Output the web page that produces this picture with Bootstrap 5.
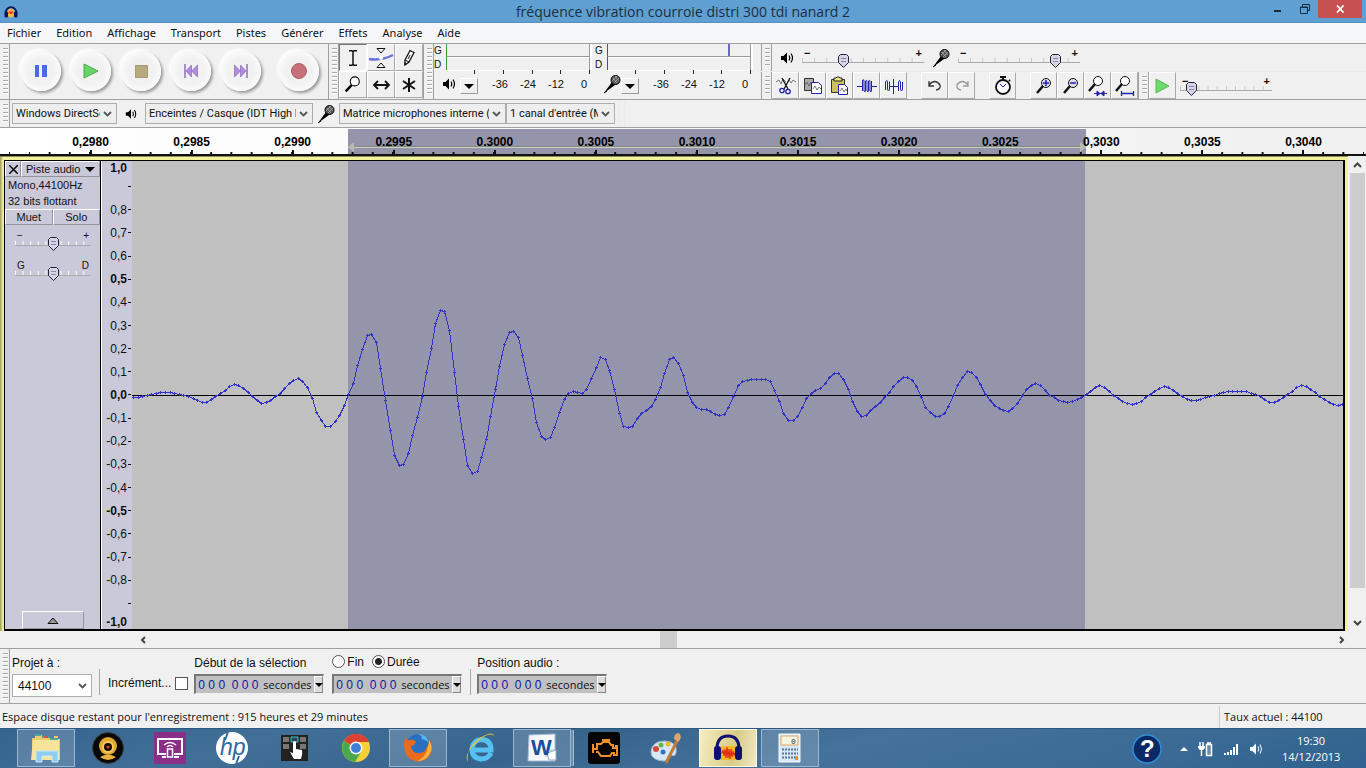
<!DOCTYPE html>
<html lang="fr">
<head>
<meta charset="utf-8">
<meta name="viewport" content="width=device-width, initial-scale=1">
<title>fréquence vibration courroie distri 300 tdi nanard 2</title>
<link href="https://cdn.jsdelivr.net/npm/bootstrap@5.3.0/dist/css/bootstrap.min.css" rel="stylesheet">
<style>
:root{--face:#f0f0f0;--edge:#a0a0a0;--panel:#c9c9da;--sel:#9494aa;--wave:#3232c8}
body{font:12px/16px "Open Sans","Noto Sans",sans-serif;color:#111;background:var(--face);min-height:100vh;overflow:hidden}
button,select,input{font:inherit;color:inherit;border-radius:0}
svg{display:block;flex:none}
.arial{font-family:"Liberation Sans",Arial,sans-serif}
/* title and menus */
.titlebar{height:23px;background:#5f9fd1;color:#1b2f40;border-bottom:1px solid #5590c0}
.titlebar h1{font:14px/24px "Open Sans","Noto Sans",sans-serif;margin:0}
.winbtns{top:0;right:4px}
.winbtns button{border:0;background:none;height:18px;width:27px;padding:0;display:flex;align-items:center;justify-content:center}
.winbtns .closebtn{width:44px;background:#c75050}
.menus{height:20px;background:#f5f6f7;padding-left:7px;gap:15px}
.menus a{color:#111;text-decoration:none;line-height:20px;font-family:"Noto Sans",sans-serif;font-size:11px}
/* toolbars */
.tbrow{border-top:1px solid var(--edge)}
.tbtop{height:56px}
.transport{padding-left:6px;padding-right:4px}
.grip{width:10px;flex:none;border-right:1px solid var(--edge);background:repeating-linear-gradient(#a8a8a8 0 1px,#fff 1px 2px,transparent 2px 4px) 3px 4px/5px calc(100% - 8px) no-repeat}
.grip.lined{border-left:1px solid var(--edge);width:11px}
.round-btn{width:50px;height:54px;border:0;background:none;padding:0;display:flex;align-items:center;justify-content:center}
.round-btn span{width:40px;height:40px;border-radius:50%;background:radial-gradient(circle at 50% 50%,#f1f1f1 45%,#fff 85%);box-shadow:2px 2px 3px #9a9a9a,-2px -2px 3px #fff;display:flex;align-items:center;justify-content:center}
.sqbtn{width:27px;height:27px;padding:0;border:1px solid;border-color:#fff #a9a9a9 #a9a9a9 #fff;background:var(--face);display:flex;align-items:center;justify-content:center}
.sqbtn.tall{width:28px}
.sqbtn.pressed{border-color:#777 #fff #fff #777}
.gap14{width:14px}
.meters{padding-right:5px}
.meter{width:161px}
.gd{width:12px;font-size:10px;line-height:14px}
.lvl{width:144px;height:13px;border-left:1px solid #3a9a3a;border-right:1px solid #999;border-bottom:1px solid #999;box-shadow:0 1px #fff,2px 0 #fff}
.lvl.in{border-left-color:#a33}
.lvl .peak{width:2px;height:12px;margin-left:120px;background:#6868d0}
.lvlticks{height:4px;width:116px;margin-left:28px}
.lvlticks i{width:1px;background:#222}
.lvlrow{width:144px;height:20px;font-size:11px;margin-left:-4px}
.lvlrow svg{width:18px}
.lvlrow span{width:28px;flex:none;text-align:center}
.lvlrow button+span{margin-left:8px}
.dropbtn{width:18px;height:16px;flex:none;padding:0;border:1px solid;border-color:#fff #999 #999 #fff;background:var(--face);display:flex;align-items:center;justify-content:center}
.tri{border:5px solid transparent;border-top-color:#000;border-bottom:0}
.flatsel{appearance:none;height:21px;border:1px solid #adadad;padding:0 16px 0 3px;font:11px/18px Roboto,"Noto Sans",sans-serif;color:#111;background:#eee url("data:image/svg+xml,%3Csvg xmlns='http://www.w3.org/2000/svg' width='9' height='6'%3E%3Cpath d='M1 1l3.500 3.500L8 1' fill='none' stroke='%23555' stroke-width='1.800'/%3E%3C/svg%3E") right 4px center no-repeat}
/* sliders */
.sl{display:flex;flex-direction:column}
.sl .ends{display:flex;justify-content:space-between;padding:0 2px;height:10px;font:11px/10px "Liberation Sans",sans-serif}
.sl .ends b{font-weight:bold}
.sl input{--tick:#c4c4c4;appearance:none;width:100%;height:14px;margin:-4px 0 0;background:linear-gradient(#aaa,#aaa) 0 8px/100% 1px no-repeat,linear-gradient(90deg,var(--tick) 0 10%,transparent 10%) 0 4px/10% 4px repeat-x}
.sl input::-webkit-slider-thumb{appearance:none;width:11px;height:14px;background:url("data:image/svg+xml,%3Csvg xmlns='http://www.w3.org/2000/svg' width='11' height='14'%3E%3Cpath d='M2.500.5h6l2 2v6l-5 5-5-5v-6z' fill='%23d4d4e6' stroke='%23223'/%3E%3Cpath d='M3 4.500h5M3 7.500h5' stroke='%238888a4'/%3E%3C/svg%3E")}
.w-gain{width:122px}.w-speed{width:92px}
/* time ruler */
.ruler{height:29px;border-top:1px solid var(--edge);border-bottom:2px solid #111;background:linear-gradient(90deg,#fff,#f0f0f0)}
.rsel{left:25.5%;width:54%;top:1px;bottom:0;background:var(--sel)}
.rsel i{left:0;right:0;bottom:6px;height:2px;background:#7d8c7d;border-bottom:1px solid #c8d0c0}
.rsel svg{bottom:2px}
.rcell{flex:1 1 0;text-align:center;font:bold 12px/28px "Liberation Sans",sans-serif;color:#000;background:linear-gradient(#111,#111) center bottom/2px 4px no-repeat,linear-gradient(90deg,transparent 45%,#111 45% 52%,transparent 52%) 0 100%/20% 2px repeat-x}
.rpad{background:linear-gradient(90deg,transparent 45%,#111 45% 52%,transparent 52%) 0 100%/20px 2px repeat-x}
/* track */
.trackwrap{background:linear-gradient(90deg,#9a9a60,#f2f29a 3px);padding:3px 3px 0 4px;border-top:1px solid #8c8c60}
.track{border:1px solid #000;border-right-width:2px;border-bottom-width:2px}
.tpanel{width:96px;background:var(--panel);border-right:1px solid #000;font-size:11px}
.tpanel button{background:none;border:1px solid;border-color:#fff #94949c #94949c #fff;padding:0;font-size:11px;line-height:14px}
.tpanel .info{padding-left:3px}
.tpanel .sl{width:76px;margin:6px 0 0 10px}
.tpanel .sl+.sl{margin-top:10px}
.tpanel .sl input{--tick:#fff}
.tpanel .sl b{font-weight:normal;font-size:10px}
.vscale{width:31px;background:var(--panel);border-left:1px solid #fff;font:12px/14px "Liberation Sans",sans-serif}
.vscale div{min-height:0;display:flex;align-items:center;justify-content:flex-end}
.vscale .u2{flex:2 2 0}.vscale .u1{flex:1 1 0}
.vscale .u2::after{content:"";width:3px;height:1px;background:#111;margin:0 1px}
.vscale b.u1{padding-right:5px;display:flex;align-items:center;justify-content:flex-end}
.wavebox{background:#c0c0c0;min-width:0}
.wavebox svg{position:absolute;inset:0;width:100%;height:100%}
.vscroll{width:18px;padding:0 1px 0 2px}
.sbtn{border:0;background:none;padding:0;display:flex;align-items:center;justify-content:center}
.vscroll .sbtn{height:17px}
.thumb{background:#cdcdcd}
/* selection bar */
.selbar{height:56px;border-top:1px solid var(--edge);border-bottom:1px solid var(--edge);font-size:12px}
.selbar .field{padding-top:6px}
.selbar .cap{line-height:16px;height:19px}
.rate{height:23px;width:80px;background-color:#fff;font:12px/20px "Liberation Sans",sans-serif;padding-left:5px}
.vsep{width:1px;height:26px;background:#a9a9a9}
.timebox{width:130px;height:20px;background:#c0c0c0;border:1px solid;border-color:#777 #eee #eee #777;border-width:2px 1px 1px 2px}
.timebox input{width:67px;border:0;background:none;padding:0 0 0 2px;color:#1414a8;font:12px/16px "Liberation Sans",sans-serif;outline:0}
.timebox label{font:11px/18px "Open Sans",sans-serif;width:51px}
.timebox button{width:9px;height:17px;flex:none;padding:0;border:1px solid;border-color:#fff #888 #888 #fff;background:#ddd;display:flex;align-items:center;justify-content:center}
.timebox .tri{border-width:4px 4px 0}
.selbar input[type=radio],.selbar input[type=checkbox]{appearance:none;width:13px;height:13px;margin:0;border:1px solid #555;background:#fff}
.selbar input[type=radio]{border-radius:50%}
.selbar input[type=radio]:checked{background:radial-gradient(circle,#222 0 3px,#fff 4px)}
.selbar .cap label{line-height:14px;padding-left:2px}
.statusbar{height:24px;font-size:11px;line-height:22px;padding:2px 2px 0}
.statusbar .ratecell{width:145px;border-left:1px solid #ccc;padding-left:4px}
/* taskbar */
.taskbar{height:40px;background:linear-gradient(165deg,#34648f 0,#416f98 20%,#37648d 40%,#44729a 60%,#3c6b96 80%,#2f628f);padding-left:17px;border-top:1px solid #2b5880;color:#fff}
.app{width:58px;height:38px;padding:0;border:1px solid transparent;background:none;display:flex;align-items:center;justify-content:center}
.app.open{border-color:#9db6cb;background:#ffffff2b}
.app.multi{box-shadow:3px 0 0 -1px #6f90ad,4px 0 0 -1px #a4bbce}
.app.active{border:1px solid #fffbe0;background:linear-gradient(100deg,#f5eec0,#d9cb86 60%,#efe9c4)}
.tray{gap:10px;padding-right:26px}
.clock{font:11px/16px "Open Sans",sans-serif;text-align:center;width:58px}
</style>
</head>
<body class="d-flex flex-column">

<svg width="0" height="0" class="position-absolute" aria-hidden="true">
  <symbol id="spk" viewBox="0 0 14 14"><path d="M1 5h2.500L7 1.500v11L3.500 9H1z" fill="#000"/><path d="M9 4.500q1.500 2.500 0 5M11 2.500q3 4.500 0 9" fill="none" stroke="#000" stroke-width="1.200"/></symbol>
  <symbol id="mic" viewBox="0 0 18 20"><path d="M1 19L9 8l3 3z" fill="#000"/><path d="M1 19l3-2" stroke="#000"/><circle cx="12.500" cy="6" r="4.500" fill="#555" stroke="#000"/><path d="M10 4l4 5M12 2l4 5M9 7l5-5M11 9l5-5" stroke="#aaa" stroke-width=".8"/></symbol>
  <symbol id="mag" viewBox="0 0 20 22"><circle cx="12" cy="7" r="5" fill="#fff" stroke="#000" stroke-width="1.200"/><path d="M8.500 11L2 18" stroke="#000" stroke-width="2.800"/></symbol>
</svg>

<header class="titlebar position-relative text-center">
  <svg class="position-absolute top-0 start-0 mt-1 ms-1" width="14" height="15" viewBox="0 0 28 28"><ellipse cx="14" cy="17" rx="7" ry="9" fill="#f6b63a"/><path d="M9 18l3-4 2 5 2-5 3 4" fill="none" stroke="#d22" stroke-width="2"/><path d="M3 18a11 13 0 0 1 22 0" fill="none" stroke="#0b1560" stroke-width="3.500"/><rect x="1" y="14" width="7" height="12" rx="3" fill="#0b1560"/><rect x="20" y="14" width="7" height="12" rx="3" fill="#0b1560"/></svg>
  <h1>fréquence vibration courroie distri 300 tdi nanard 2</h1>
  <div class="winbtns position-absolute d-flex">
    <button aria-label="Réduire"><svg width="8" height="8"><path d="M0 6h7" stroke="#1a2c3c" stroke-width="2"/></svg></button>
    <button aria-label="Restaurer"><svg width="10" height="10"><path d="M.5 3h7v6.500h-7zM2.500 2.500v-2h7v6h-2M0 3.500h8" fill="none" stroke="#1a2c3c"/></svg></button>
    <button class="closebtn" aria-label="Fermer"><svg width="9" height="8"><path d="M1 .5l6.500 7M7.500.5L1 7.500" stroke="#fff" stroke-width="1.800"/></svg></button>
  </div>
</header>

<nav class="menus d-flex">
  <a href="#">Fichier</a><a href="#">Edition</a><a href="#">Affichage</a><a href="#">Transport</a><a href="#">Pistes</a><a href="#">Générer</a><a href="#">Effets</a><a href="#">Analyse</a><a href="#">Aide</a>
</nav>

<div class="tbrow tbtop d-flex">
  <div class="grip"></div>
  <div class="transport d-flex">
    <button class="round-btn" aria-label="Pause"><span><svg width="14" height="12"><path d="M1 0h4v12H1zM8 0h5v12H8z" fill="#4a6ae4"/></svg></span></button>
    <button class="round-btn" aria-label="Lire"><span><svg width="16" height="16"><path d="M1 1l14 7-14 7z" fill="#66d466" stroke="#4aa84a"/></svg></span></button>
    <button class="round-btn" aria-label="Arrêter"><span><svg width="13" height="13"><path d="M.5.5h12v12H.5z" fill="#b8aa80" stroke="#a89a70"/></svg></span></button>
    <button class="round-btn" aria-label="Début"><span><svg width="14" height="14"><path d="M1 0v14" stroke="#8a70b8" stroke-width="1.500"/><path d="M7.500 1v12L2 7zM13.500 1v12L7.500 7z" fill="#b28ae0" stroke="#8a70b8" stroke-width=".7"/></svg></span></button>
    <button class="round-btn" aria-label="Fin"><span><svg width="14" height="14"><path d="M13 0v14" stroke="#8a70b8" stroke-width="1.500"/><path d="M.5 1v12L6.500 7zM6.500 1v12L12 7z" fill="#b28ae0" stroke="#8a70b8" stroke-width=".7"/></svg></span></button>
    <button class="round-btn ms-2" aria-label="Enregistrer"><span><svg width="16" height="16"><circle cx="8" cy="8" r="7.500" fill="#c8707a" stroke="#a8606a"/></svg></span></button>
  </div>
  <div class="grip lined"></div>
  <div>
    <div class="d-flex">
      <button class="sqbtn tall pressed" aria-label="Sélection"><svg width="10" height="16"><path d="M1 .8h3l1 1 1-1h3M1 15.200h3l1-1 1 1h3M5 1v14" fill="none" stroke="#111" stroke-width="1.500"/></svg></button>
      <button class="sqbtn tall" aria-label="Enveloppe"><svg width="26" height="22"><path d="M1 12q12 2 24-4" fill="none" stroke="#6b74dc" stroke-width="2.500"/><path d="M9 1.500h8L13 6zM9 20.500h8L13 16z" fill="#fff" stroke="#111"/><circle cx="13" cy="11" r="2" fill="#fff"/></svg></button>
      <button class="sqbtn tall" aria-label="Retouche"><svg width="12" height="18"><path d="M2 11L7 1.500l4 2L6 13l-4 3z" fill="#fff" stroke="#111" stroke-width="1.300"/><path d="M2 11l4 2M7 6l-2 4M2 16v-3" stroke="#111"/></svg></button>
    </div>
    <div class="d-flex">
      <button class="sqbtn tall" aria-label="Zoom"><svg width="18" height="20"><use href="#mag" width="18" height="20"/></svg></button>
      <button class="sqbtn tall" aria-label="Glissement"><svg width="17" height="10"><path d="M2 5h13M5 1L1 5l4 4M12 1l4 4-4 4" fill="none" stroke="#111" stroke-width="1.800"/></svg></button>
      <button class="sqbtn tall" aria-label="Multi-outils"><svg width="14" height="14"><path d="M7 0v14M1 3l12 8M13 3L1 11" stroke="#111" stroke-width="2"/></svg></button>
    </div>
  </div>
  <div class="grip lined"></div>
  <div class="meters d-flex arial">
    <div class="meter d-flex">
      <div class="gd">G<br>D</div>
      <div>
        <div class="lvl"></div><div class="lvl border-bottom-0"></div>
        <div class="lvlticks d-flex justify-content-between"><i></i><i></i><i></i><i></i><i></i></div>
        <div class="lvlrow d-flex align-items-center">
          <svg height="14"><use href="#spk" width="14" height="14"/></svg>
          <button class="dropbtn mt-1" aria-label="Niveau de sortie"><i class="tri"></i></button>
          <span>-36</span><span>-24</span><span>-12</span><span>0</span>
        </div>
      </div>
    </div>
    <div class="meter d-flex">
      <div class="gd">G<br>D</div>
      <div>
        <div class="lvl in"><div class="peak"></div></div><div class="lvl in border-bottom-0"></div>
        <div class="lvlticks d-flex justify-content-between"><i></i><i></i><i></i><i></i><i></i></div>
        <div class="lvlrow d-flex align-items-center">
          <svg height="20"><use href="#mic" width="18" height="20"/></svg>
          <button class="dropbtn mt-1" aria-label="Niveau d'entrée"><i class="tri"></i></button>
          <span>-36</span><span>-24</span><span>-12</span><span>0</span>
        </div>
      </div>
    </div>
  </div>
  <div class="flex-grow-1">
    <div class="d-flex border-bottom border-secondary-subtle" style="height:28px">
      <div class="grip lined"></div>
      <div class="d-flex align-items-center ps-2">
        <svg width="14" height="14"><use href="#spk"/></svg>
        <div class="sl w-gain ms-2"><div class="ends"><b>−</b><b>+</b></div><input type="range" value="32" aria-label="Volume de sortie"></div>
        <svg class="ms-2" width="18" height="20"><use href="#mic"/></svg>
        <div class="sl w-gain ms-2"><div class="ends"><b>−</b><b>+</b></div><input type="range" value="83" aria-label="Volume d'entrée"></div>
      </div>
    </div>
    <div class="d-flex" style="height:27px">
      <div class="grip lined"></div>
      <button class="sqbtn" aria-label="Couper"><svg width="20" height="18"><path d="M0 5l3-2 2 4 2-5 3 3M13 3l2 3 2-3 3 2" fill="none" stroke="#777"/><path d="M6 1l6 11M14 1L8 12" stroke="#111" stroke-width="1.300"/><circle cx="6" cy="13.500" r="2.200" fill="none" stroke="#22a" stroke-width="1.300"/><circle cx="12" cy="14.500" r="2.200" fill="none" stroke="#22a" stroke-width="1.300"/></svg></button>
      <button class="sqbtn" aria-label="Copier"><svg width="20" height="18"><path d="M1.500 1.500h9v12h-9z" fill="#aaa" stroke="#333"/><path d="M8.500 5.500h7l3 3v8h-10z" fill="#fff" stroke="#22a"/><path d="M2 8l2-3 2 4 2-4M10 12l2-3 2 4 2-3 2 2" fill="none" stroke="#555" stroke-width=".8"/></svg></button>
      <button class="sqbtn" aria-label="Coller"><svg width="20" height="20"><path d="M1.500 3.500h13v13h-13z" fill="#c9c35a" stroke="#333"/><path d="M4 2h2l1-1h2l1 1h2v3H4z" fill="#eee48a" stroke="#222"/><path d="M8.500 8.500h6l3 3v7h-9z" fill="#fff" stroke="#22a"/><path d="M10 15l2-3 2 4 2-3 1 2" fill="none" stroke="#555" stroke-width=".8"/></svg></button>
      <button class="sqbtn" aria-label="Rogner"><svg width="20" height="16"><path d="M0 8.500h5.500V3M14.500 8.500H20M5.500 13V2q1.500-1 1.500 1v10q1.500 2 1.500-1V3q1.500-2 1.500 1v9q1.500 2 1.500-1V3q1.500-2 1.500 1v9q1.500 2 1.500-1V3" fill="none" stroke="#22a"/></svg></button>
      <button class="sqbtn" aria-label="Silence"><svg width="20" height="16"><path d="M1.500 12V4q1.500-3 2 0v7q1 4 2 0V3.500M5.500 8.500h9M9.500 1v15M14.500 13V4q1-3 2 0v7q1 4 2 0V4" fill="none" stroke="#22a"/></svg></button>
      <span class="gap14"></span>
      <button class="sqbtn" aria-label="Annuler"><svg width="14" height="12"><path d="M1 5q6-7 11 0 1 4-4 5M1 1v5h5" fill="none" stroke="#333" stroke-width="1.300"/></svg></button>
      <button class="sqbtn" aria-label="Rétablir"><svg width="14" height="12"><path d="M13 5Q7-2 2 5q-1 4 4 5M13 1v5H8" fill="none" stroke="#999" stroke-width="1.300"/></svg></button>
      <span class="gap14"></span>
      <button class="sqbtn" aria-label="Synchroniser"><svg width="18" height="20"><circle cx="9" cy="11" r="7" fill="#fff" stroke="#111" stroke-width="1.800"/><path d="M6 1h6M9 1v3M15 4l1 1" stroke="#111" stroke-width="2"/><path d="M6 8l3 3 3-3" stroke="#22a" fill="none"/></svg></button>
      <span class="gap14"></span>
      <button class="sqbtn" aria-label="Zoom avant"><svg width="20" height="20"><circle cx="12" cy="7" r="4.500" fill="#dde" stroke="#111"/><path d="M9 10l-6 7" stroke="#111" stroke-width="2.500"/><path d="M9 7h6M12 4v6" stroke="#22a" stroke-width="1.500"/></svg></button>
      <button class="sqbtn" aria-label="Zoom arrière"><svg width="20" height="20"><circle cx="12" cy="7" r="4.500" fill="#dde" stroke="#111"/><path d="M9 10l-6 7" stroke="#111" stroke-width="2.500"/><path d="M9 7h6" stroke="#22a" stroke-width="1.500"/></svg></button>
      <button class="sqbtn" aria-label="Ajuster la sélection"><svg width="20" height="22"><circle cx="10" cy="6" r="4.500" fill="#fff" stroke="#111"/><path d="M7 9l-6 7" stroke="#111" stroke-width="2.500"/><path d="M6 18.500h13M9 16l3 2.500L9 21zM16 16l-3 2.500 3 2.500z" fill="#22a" stroke="#22a"/></svg></button>
      <button class="sqbtn" aria-label="Ajuster le projet"><svg width="20" height="22"><circle cx="10" cy="6" r="4.500" fill="#fff" stroke="#111"/><path d="M7 9l-6 7" stroke="#111" stroke-width="2.500"/><path d="M7 18.500h11M6.500 16v5M18.500 16v5" fill="none" stroke="#22a" stroke-width="1.300"/></svg></button>
      <div class="grip lined"></div>
      <button class="sqbtn" aria-label="Lire à vitesse variable"><svg width="15" height="16"><path d="M1 1l13 7-13 7z" fill="#6bdc6b" stroke="#5ab85a"/></svg></button>
      <div class="sl w-speed ms-1 mt-1"><div class="ends"><b>−</b><b>+</b></div><input type="range" value="8" aria-label="Vitesse de lecture"></div>
    </div>
  </div>
</div>

<div class="tbrow d-flex align-items-center" style="height:28px">
  <div class="grip align-self-stretch"></div>
  <select class="flatsel" style="width:105px;margin-left:2px" aria-label="Interface audio"><option>Windows DirectSound</option></select>
  <svg class="mx-2" width="12" height="14"><use href="#spk"/></svg>
  <select class="flatsel" style="width:168px" aria-label="Sortie"><option>Enceintes / Casque (IDT High Definition)</option></select>
  <svg class="ms-1" width="18" height="20"><use href="#mic"/></svg>
  <select class="flatsel ms-1" style="width:167px" aria-label="Entrée"><option>Matrice microphones interne (IDT High)</option></select>
  <select class="flatsel" style="width:109px" aria-label="Canaux d'entrée"><option>1 canal d'entrée (Mono)</option></select>
  <span class="align-self-stretch border-start border-end border-secondary-subtle ms-1 ps-1"></span>
</div>

<div class="ruler position-relative d-flex">
  <div class="rsel position-absolute"><i class="position-absolute"></i>
    <svg class="position-absolute start-0" width="6" height="10"><path d="M6 0v10L0 5z" fill="#b8bcb0"/></svg>
    <svg class="position-absolute end-0" width="6" height="10"><path d="M0 0v10l6-5z" fill="#b8bcb0"/></svg></div>
  <div class="position-relative d-flex w-100">
    <div class="rpad" style="width:40px"></div>
    <div class="rcell">0,2980</div><div class="rcell">0,2985</div><div class="rcell">0,2990</div><div class="rcell">0.2995</div><div class="rcell">0.3000</div><div class="rcell">0.3005</div><div class="rcell">0.3010</div><div class="rcell">0.3015</div><div class="rcell">0.3020</div><div class="rcell">0.3025</div><div class="rcell">0,3030</div><div class="rcell">0,3035</div><div class="rcell">0,3040</div>
    <div class="rpad" style="width:12px"></div>
  </div>
</div>

<main class="d-flex flex-grow-1">
  <div class="trackwrap flex-grow-1 d-flex">
    <section class="track flex-grow-1 d-flex">
      <div class="tpanel arial d-flex flex-column">
        <div class="d-flex"><button style="width:16px" aria-label="Fermer la piste"><svg class="mx-auto" width="9" height="9"><path d="M0 0l9 9M9 0L0 9" stroke="#000" stroke-width="1.500"/></svg></button><button class="flex-grow-1 d-flex align-items-center justify-content-between px-1">Piste audio <i class="tri"></i></button></div>
        <div class="info">Mono,44100Hz<br>32 bits flottant</div>
        <div class="d-flex"><button class="flex-fill w-50">Muet</button><button class="flex-fill w-50">Solo</button></div>
        <div class="sl"><div class="ends"><b>−</b><b>+</b></div><input type="range" value="50" aria-label="Gain"></div>
        <div class="sl"><div class="ends"><b>G</b><b>D</b></div><input type="range" value="50" aria-label="Panoramique"></div>
        <button class="mt-auto mx-auto d-flex align-items-center justify-content-center" style="width:62px;height:18px" aria-label="Réduire la piste"><svg width="12" height="7"><path d="M1 6.500h10L6 1z" fill="#999" stroke="#111"/></svg></button>
      </div>
      <div class="vscale d-flex flex-column">
        <b class="u1">1,0</b><div class="u2"></div>
        <div class="u2">0,8</div><div class="u2">0,7</div><div class="u2">0,6</div><div class="u2 fw-bold">0,5</div><div class="u2">0,4</div><div class="u2">0,3</div><div class="u2">0,2</div><div class="u2">0,1</div><div class="u2 fw-bold">0,0</div><div class="u2">-0,1</div><div class="u2">-0,2</div><div class="u2">-0,3</div><div class="u2">-0,4</div><div class="u2 fw-bold">-0,5</div><div class="u2">-0,6</div><div class="u2">-0,7</div><div class="u2">-0,8</div>
        <div class="u2"></div><b class="u1">-1,0</b>
      </div>
      <div class="wavebox flex-grow-1 position-relative">
        <svg viewBox="132 161 1211 468" preserveAspectRatio="none" role="img" aria-label="Forme d'onde">
          <rect x="348" y="161" width="737" height="468" fill="#9494aa"/>
          <path d="M132 395.500h1211" stroke="#000" shape-rendering="crispEdges" vector-effect="non-scaling-stroke"/>
          <g fill="none" stroke="#3232c4" shape-rendering="crispEdges"><path id="curve"/><path id="dots"/></g>
        </svg>
      </div>
    </section>
  </div>
  <div class="vscroll d-flex flex-column">
    <button class="sbtn" aria-label="Haut"><svg width="9" height="6"><path d="M1 5l3.500-3.500L8 5" fill="none" stroke="#444" stroke-width="2"/></svg></button>
    <div class="flex-grow-1"><div class="thumb" style="height:94%"></div></div>
    <button class="sbtn" aria-label="Bas"><svg width="9" height="6"><path d="M1 1l3.500 3.500L8 1" fill="none" stroke="#444" stroke-width="2"/></svg></button>
  </div>
</main>
<div class="d-flex" style="height:17px;padding:0 17px 0 136px">
  <button class="sbtn px-1" aria-label="Gauche"><svg width="6" height="8"><path d="M5 1L2 4l3 3" fill="none" stroke="#444" stroke-width="2"/></svg></button>
  <div class="flex-grow-1"><div class="thumb h-100" style="width:17px;margin-left:43%"></div></div>
  <button class="sbtn px-1" aria-label="Droite"><svg width="6" height="8"><path d="M1 1l3 3-3 3" fill="none" stroke="#444" stroke-width="2"/></svg></button>
</div>

<div class="selbar arial d-flex">
  <div class="grip"></div>
  <div class="field" style="margin-left:2px"><label class="cap d-block" for="rate">Projet à :</label><select id="rate" class="flatsel rate"><option>44100</option></select></div>
  <span class="vsep align-self-end mb-2" style="margin-left:7px"></span>
  <div class="d-flex align-items-center align-self-end ms-2 gap-1 mb-2 pb-1"><label for="snap">Incrément...</label><input id="snap" type="checkbox"></div>
  <div class="field" style="margin-left:6px"><div class="cap">Début de la sélection</div><div class="timebox d-flex"><input id="t1" value="0 0 0  0 0 0"><label for="t1">secondes</label><button aria-label="Format"><i class="tri"></i></button></div></div>
  <div class="field ms-2"><div class="cap d-flex align-items-start"><input type="radio" name="len" id="fin"><label class="me-2" for="fin">Fin</label><input type="radio" name="len" id="dur" checked><label for="dur">Durée</label></div><div class="timebox d-flex"><input id="t2" value="0 0 0  0 0 0"><label for="t2">secondes</label><button aria-label="Format"><i class="tri"></i></button></div></div>
  <span class="vsep align-self-end mb-2 ms-2"></span>
  <div class="field" style="margin-left:6px"><div class="cap">Position audio :</div><div class="timebox d-flex"><input id="t3" value="0 0 0  0 0 0"><label for="t3">secondes</label><button aria-label="Format"><i class="tri"></i></button></div></div>
</div>
<footer class="statusbar d-flex justify-content-between"><span>Espace disque restant pour l'enregistrement : 915 heures et 29 minutes</span><span class="ratecell">Taux actuel : 44100</span></footer>

<div class="taskbar d-flex gap-1">
  <button class="app open" aria-label="Explorateur"><svg width="32" height="30"><path d="M2 5h3V2h7v3h12V3h4v3h2v21H2z" fill="#eccb6c"/><path d="M3 7h26v20H1z" fill="#f8e39b"/><path d="M5 2h6M12 4h7M20 6h8" stroke="#4a9" stroke-width="2"/><path d="M14 4h4" stroke="#e44" stroke-width="2"/><path d="M6 29V18h22v11h-6v-6H12v6z" fill="#8fcdf0" stroke="#c8eafb"/></svg></button>
  <button class="app" aria-label="Webcam"><svg width="32" height="32"><circle cx="16" cy="16" r="15.500" fill="#080808" stroke="#3a3a3a"/><path d="M8 25q8-5 16 0-8 6-16 0" fill="#e6b13c"/><circle cx="16" cy="14" r="9" fill="#e0a830"/><circle cx="16" cy="15" r="6" fill="#f3cc5c"/><circle cx="16" cy="15" r="4" fill="#170800"/><circle cx="16" cy="15" r="1.500" fill="#c43"/></svg></button>
  <button class="app" aria-label="Connexion"><svg width="32" height="32"><path d="M0 0h32v32H0z" fill="#8b2e88"/><path d="M12 22H4V7h24v15h-8M8 25h4M20 25h5" fill="none" stroke="#fff" stroke-width="2"/><path d="M13.500 17h5v8h-5z" fill="#8b2e88" stroke="#fff" stroke-width="1.500"/><path d="M10 13q6-5 12 0M13 15q3-3 6 0" fill="none" stroke="#fff" stroke-width="1.500"/></svg></button>
  <button class="app" aria-label="HP"><svg width="32" height="32"><circle cx="16" cy="16" r="16" fill="#fff"/><text x="4" y="23" font-family="Liberation Sans" font-style="italic" font-size="23" fill="#2b6c9f">hp</text><path d="M12 0L9 8M20 32l3-8" stroke="#2b6c9f" stroke-width="2"/></svg></button>
  <button class="app" aria-label="Clavier tactile"><svg width="27" height="28"><path d="M0 1h27v26H0z" fill="#222"/><g fill="#777"><path d="M2 3h6v5H2zM19 3h6v5h-6zM2 10h6v5H2zM19 10h6v5h-6z"/></g><path d="M10 3h7v5h-7z" fill="#345" stroke="#3cc"/><path d="M12 8q1.500-2 3 0v7l6 1q1 4-1 9h-7q-2-3-4-7l3 1z" fill="#fff"/></svg></button>
  <button class="app" aria-label="Chrome"><svg width="30" height="30" viewBox="0 0 30 30"><circle cx="15" cy="15" r="14" fill="#f6cf36"/><path d="M15 15L3 8A14 14 0 0 1 28 9H15z" fill="#dc4232"/><path d="M15 15L3 8A14 14 0 0 0 14 29l6-10z" fill="#4aa84e"/><circle cx="15" cy="15" r="6.500" fill="#fff"/><circle cx="15" cy="15" r="5" fill="#3f7fd6"/></svg></button>
  <button class="app open" aria-label="Firefox"><svg width="32" height="32"><circle cx="16" cy="14" r="12" fill="#2b6fc0"/><path d="M16 2q9 0 11 9-4-4-8-4 3-2-3-5" fill="#58b6ea"/><path d="M3 6q3 3 6 2 3-1 5 2-2 4-5 4 1 8 9 7 6-1 7-7 4-2 2-7 6 8 1 16-6 8-15 6Q-1 25 3 6" fill="#ec6a1c"/><path d="M27 8q5 8 0 15-4 6-12 6 11-4 12-21" fill="#f9b53a"/></svg></button>
  <button class="app" aria-label="Internet Explorer"><svg width="32" height="32"><path d="M27 21q-3 6-10 6-9-1-9-10 1-9 9.500-9.500Q27 8 27 18H9" fill="none" stroke="#55c0f2" stroke-width="5"/><path d="M4 30q-5-7 8-19T30 4q-1-6-14 2Q1 16 4 30" fill="#f2c62e"/></svg></button>
  <button class="app open multi" aria-label="Word"><svg width="30" height="30"><path d="M2 2l26-1v27H1z" fill="#f4f7fb" stroke="#a8bcd8"/><path d="M22 17h5M20 20h7M18 23h6" stroke="#a3b7d2"/><path d="M20 20l9-3v10h-7z" fill="#fff" stroke="#9ab"/><text x="4" y="22" font-family="Liberation Sans" font-weight="bold" font-size="22" fill="#1b4f9c">W</text></svg></button>
  <button class="app" aria-label="Diagnostic moteur"><svg width="32" height="32"><rect width="32" height="32" rx="3" fill="#050505"/><path d="M5 12v9M5 17h4v-5h4l2-2h6l2 3h2v3h3v-2h1v9h-3v-2h-2l-2 3H13l-3-4H8M14 8h8M17 8v3" fill="none" stroke="#f0902a" stroke-width="2"/></svg></button>
  <button class="app" aria-label="Paint"><svg width="32" height="32"><path d="M1 20Q2 9 15 9q13 1 11 12-1 4-5 2-4 0-3 3 0 3-5 3Q1 28 1 20" fill="#d7e7f6" stroke="#9fb8d2"/><circle cx="6" cy="17" r="3" fill="#d64a3e"/><circle cx="11" cy="13" r="2.500" fill="#64b84a"/><circle cx="18" cy="12" r="2.500" fill="#f2b52c"/><circle cx="13" cy="20" r="2.500" fill="#3c6fc4"/><path d="M27 9L16 31" stroke="#c27a34" stroke-width="3"/><path d="M24 7q0-6 5-6 4 5-1 9z" fill="#e0a468"/></svg></button>
  <button class="app active" aria-label="Audacity"><svg width="30" height="28" viewBox="0 0 30 28"><path d="M8 12h14v14H8z" fill="#f9b62a"/><path d="M8 19h1l1-3 1 6 1-7 1 9 1-11 1 11 1-9 1 10 1-10 1 8 1-6 1 4 1-2" fill="none" stroke="#e22d12" stroke-width="1.200"/><path d="M4 15Q4 2 15 2t11 13" fill="none" stroke="#101070" stroke-width="3"/><rect x="1" y="12" width="7" height="14" rx="3" fill="#101070"/><rect x="22" y="12" width="7" height="14" rx="3" fill="#101070"/></svg></button>
  <button class="app open" aria-label="Calculatrice"><svg width="24" height="30"><path d="M1 1h21v28H1z" fill="#d8e8f6" stroke="#f5fafe"/><path d="M3 3h17v9H3z" fill="#f4f4e4" stroke="#e8a55a"/><text x="13" y="11" font-family="Liberation Mono" font-size="8" fill="#234">0</text><path d="M4 16.500h16M4 20.500h16M4 24.500h16" stroke="#54779e" stroke-width="2" stroke-dasharray="2 1"/><path d="M17 23h3v4h-3z" fill="#e8902a"/></svg></button>
  <div class="tray d-flex align-items-center ms-auto">
    <svg width="30" height="30"><circle cx="15" cy="15" r="14" fill="#0a2a66" stroke="#2f8fd8" stroke-width="1.500"/><text x="8" y="23" font-family="Liberation Sans" font-weight="bold" font-size="24" fill="#fff">?</text></svg>
    <svg class="ms-2" width="8" height="5"><path d="M0 5l4-4 4 4z" fill="#fff"/></svg>
    <svg width="16" height="16"><path d="M8.500 3.500h5v11h-5zM9 2h4" fill="#6c8cab" stroke="#fff" stroke-width="1.500"/><path d="M2 1v4M5 1v4M3.500 8v7" stroke="#fff" stroke-width="1.500"/><path d="M0 5h7v2L5 9H2L0 7z" fill="#fff"/></svg>
    <svg width="15" height="12"><path d="M1 12v-2M4 12V9M7 12V7M10 12V4M13 12V1" stroke="#fff" stroke-width="2"/></svg>
    <svg width="15" height="14"><path d="M1 5h2.500L7 1.500v11L3.500 9H1z" fill="#fff"/><path d="M9 4.500q1.500 2.500 0 5M11 2.500q3 4.500 0 9" fill="none" stroke="#fff"/></svg>
    <div class="clock ms-2">19:30<br>14/12/2013</div>
  </div>
</div>

<script src="https://cdn.jsdelivr.net/npm/bootstrap@5.3.0/dist/js/bootstrap.bundle.min.js"></script>
<script>
// Waveform nodes (time axis, amplitude axis), joined by a monotone cubic and resampled once per audio sample.
const nodes = "133,397 167,392 185,395 204,402 217,395 236,384 251,395 263,403 277,395 298,378 310,392 313,404 319,417 327,427 337,418 348,395 355,376 359,359 369,333 373,335 378,352 382,380 387,414 392,444 396,462 400,466 406,459 410,444 419,408 428,363 437,317 442,308 447,319 451,345 455,385 461,424 465,455 470,472 474,474 479,464 489,423 493,398 498,374 502,353 506,337 511,330 516,334 521,347 524,367 530,390 534,412 538,429 543,439 547,439 552,433 557,419 561,406 566,395 573,391 581,393 585,391 593,373 602,356 607,363 612,380 616,400 620,419 625,427 630,427 639,415 648,408 653,403 657,394 662,380 667,365 671,356 675,358 680,368 685,383 689,397 698,408 708,410 717,415 722,415 726,411 731,401 735,391 739,383 744,380 768,379 772,385 777,396 786,418 790,421 795,418 800,411 805,400 809,394 818,389 822,386 831,375 837,372 845,383 850,396 859,414 863,416 872,409 886,395 896,383 905,376 914,383 927,409 937,417 946,410 955,390 960,380 968,371 978,380 987,397 997,407 1006,411 1015,406 1023,393 1035,383 1051,396 1067,402 1083,396 1100,385 1115,396 1132,404 1149,395 1164,386 1182,396 1191,400 1213,395 1221,392 1242,391 1258,395 1271,402 1286,395 1302,385 1320,396 1336,405 1344,404"
  .split(" ").map(p => p.split(",").map(Number));
const slope = nodes.slice(1).map((p, i) => (p[1] - nodes[i][1]) / (p[0] - nodes[i][0]));
const tan = nodes.map((p, i) => {
  const a = slope[i - 1], b = slope[i];
  return a === undefined || b === undefined || a * b <= 0 ? 0 : 2 * a * b / (a + b);
});
const step = 101 / 22.05;
let line = "", marks = "";
for (let x = 133, k = 0; x < 1343; x += step) {
  while (x > nodes[k + 1][0]) k++;
  const [x0, y0] = nodes[k], [x1, y1] = nodes[k + 1], h = x1 - x0, t = (x - x0) / h;
  const y = Math.round(y0 * (1 + 2 * t) * (1 - t) ** 2 + h * tan[k] * t * (1 - t) ** 2 + y1 * t * t * (3 - 2 * t) + h * tan[k + 1] * t * t * (t - 1)) + .5;
  const px = Math.round(x) + .5;
  line += (line ? "L" : "M") + px + " " + y;
  marks += `M${px - 1.5} ${y}h3M${px} ${y - 1.5}v3`;
}
document.getElementById("curve").setAttribute("d", line);
document.getElementById("dots").setAttribute("d", marks);
</script>
</body>
</html>
